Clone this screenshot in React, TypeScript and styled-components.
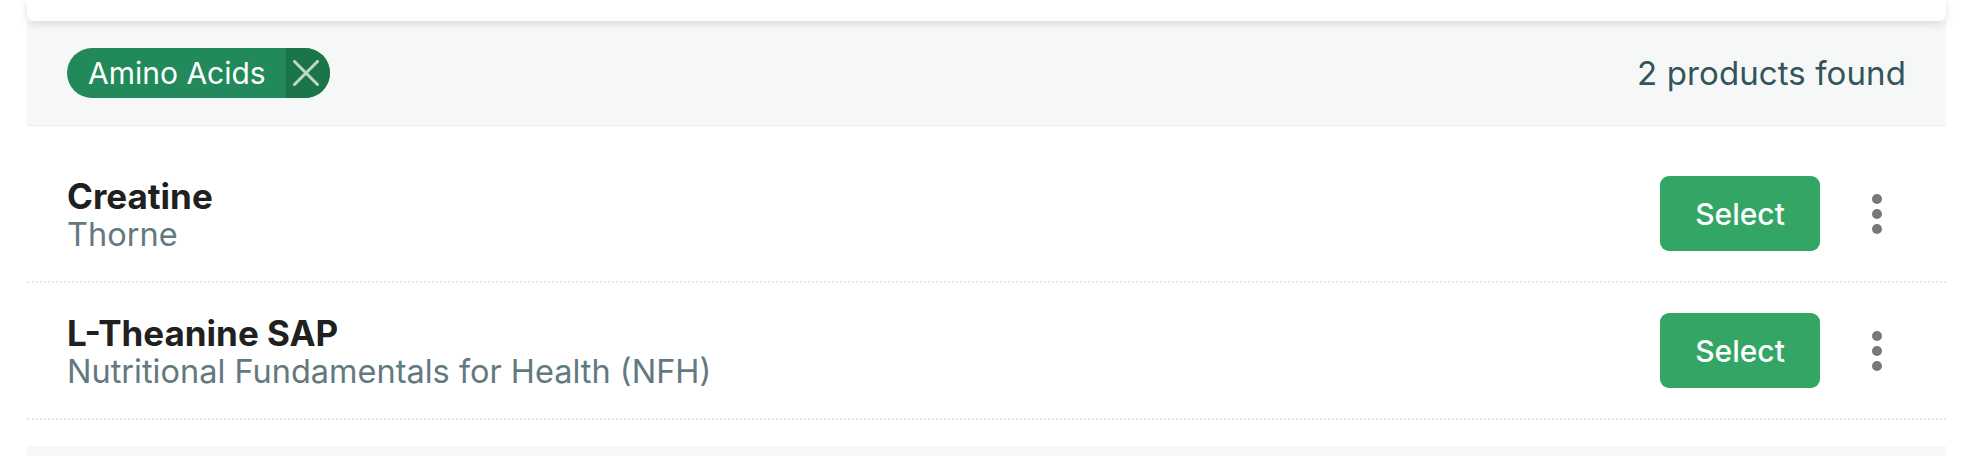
import React from "react";
import styled, { createGlobalStyle } from "styled-components";

const GlobalStyle = createGlobalStyle`
  html, body {
    margin: 0;
    padding: 0;
    background: #ffffff;
    font-family: Inter, "Noto Sans", "Liberation Sans", sans-serif;
    overflow: hidden;
  }
  * { box-sizing: border-box; }
`;

const Page = styled.div`
  padding: 0 28px 0 27px;
  display: flex;
  flex-direction: column;
`;

const TopCard = styled.div`
  position: relative;
  z-index: 1;
  height: 21px;
  background: #ffffff;
  border-radius: 0 0 8px 8px;
  box-shadow: 0 3px 8px rgba(0, 0, 0, 0.12);
`;

const FilterBar = styled.div`
  display: flex;
  align-items: center;
  justify-content: space-between;
  height: 105px;
  padding: 0 40px;
  background: #f6f8f8;
  border-bottom: 1px solid #eceeee;
`;

const Chip = styled.div`
  display: flex;
  align-items: stretch;
  height: 50px;
  border-radius: 25px;
  overflow: hidden;
  background: #21895a;
  color: #ffffff;
  font-size: 30px;
  line-height: 50px;
`;

const ChipLabel = styled.span`
  padding: 0 20px 0 21px;
`;

const ChipRemove = styled.button`
  display: flex;
  align-items: center;
  justify-content: center;
  width: 44px;
  padding: 0 4px 0 0;
  border: none;
  background: #1c7449;
  cursor: pointer;
`;

const Count = styled.span`
  font-size: 33px;
  color: #34535a;
  letter-spacing: 0.1px;
`;

const List = styled.div`
  display: flex;
  flex-direction: column;
  padding: 20px 0 26px;
`;

const Row = styled.div`
  display: flex;
  align-items: center;
  justify-content: space-between;
  min-height: 137px;
  padding: 0 39px 0 40px;
  border-bottom: 2px dotted #e6e9e9;
`;

const Info = styled.div`
  display: flex;
  flex-direction: column;
`;

const Title = styled.span`
  font-size: 35px;
  font-weight: 700;
  line-height: 42px;
  color: #202020;
`;

const Subtitle = styled.span`
  font-size: 32.5px;
  line-height: 36px;
  color: #627980;
`;

const Actions = styled.div`
  display: flex;
  align-items: center;
  gap: 27px;
`;

const SelectButton = styled.button`
  width: 160px;
  height: 75px;
  border: none;
  border-radius: 9px;
  background: #33a565;
  color: #ffffff;
  font-family: inherit;
  font-size: 30px;
  font-weight: 500;
  cursor: pointer;
`;

const MoreButton = styled.button`
  display: flex;
  align-items: center;
  justify-content: center;
  width: 60px;
  height: 60px;
  padding: 0;
  border: none;
  background: transparent;
  cursor: pointer;
`;

const Footer = styled.div`
  height: 20px;
  background: #f6f8f8;
`;

const CloseIcon = () => (
  <svg width="26" height="26" viewBox="0 0 26 26" fill="none">
    <path
      d="M1.5 1.5 L24.5 24.5 M24.5 1.5 L1.5 24.5"
      stroke="rgba(255,255,255,0.72)"
      strokeWidth="3"
      strokeLinecap="round"
    />
  </svg>
);

const MoreIcon = () => (
  <svg width="60" height="60" viewBox="0 0 24 24" fill="#787878">
    <circle cx="12" cy="6" r="2" />
    <circle cx="12" cy="12" r="2" />
    <circle cx="12" cy="18" r="2" />
  </svg>
);

const products = [
  { name: "Creatine", brand: "Thorne" },
  { name: "L-Theanine SAP", brand: "Nutritional Fundamentals for Health (NFH)" },
];

export default function App() {
  return (
    <>
      <GlobalStyle />
      <Page>
        <TopCard />
        <FilterBar>
          <Chip>
            <ChipLabel>Amino Acids</ChipLabel>
            <ChipRemove aria-label="Remove filter">
              <CloseIcon />
            </ChipRemove>
          </Chip>
          <Count>{products.length} products found</Count>
        </FilterBar>
        <List>
          {products.map((p) => (
            <Row key={p.name}>
              <Info>
                <Title>{p.name}</Title>
                <Subtitle>{p.brand}</Subtitle>
              </Info>
              <Actions>
                <SelectButton>Select</SelectButton>
                <MoreButton aria-label="More options">
                  <MoreIcon />
                </MoreButton>
              </Actions>
            </Row>
          ))}
        </List>
        <Footer />
      </Page>
    </>
  );
}
